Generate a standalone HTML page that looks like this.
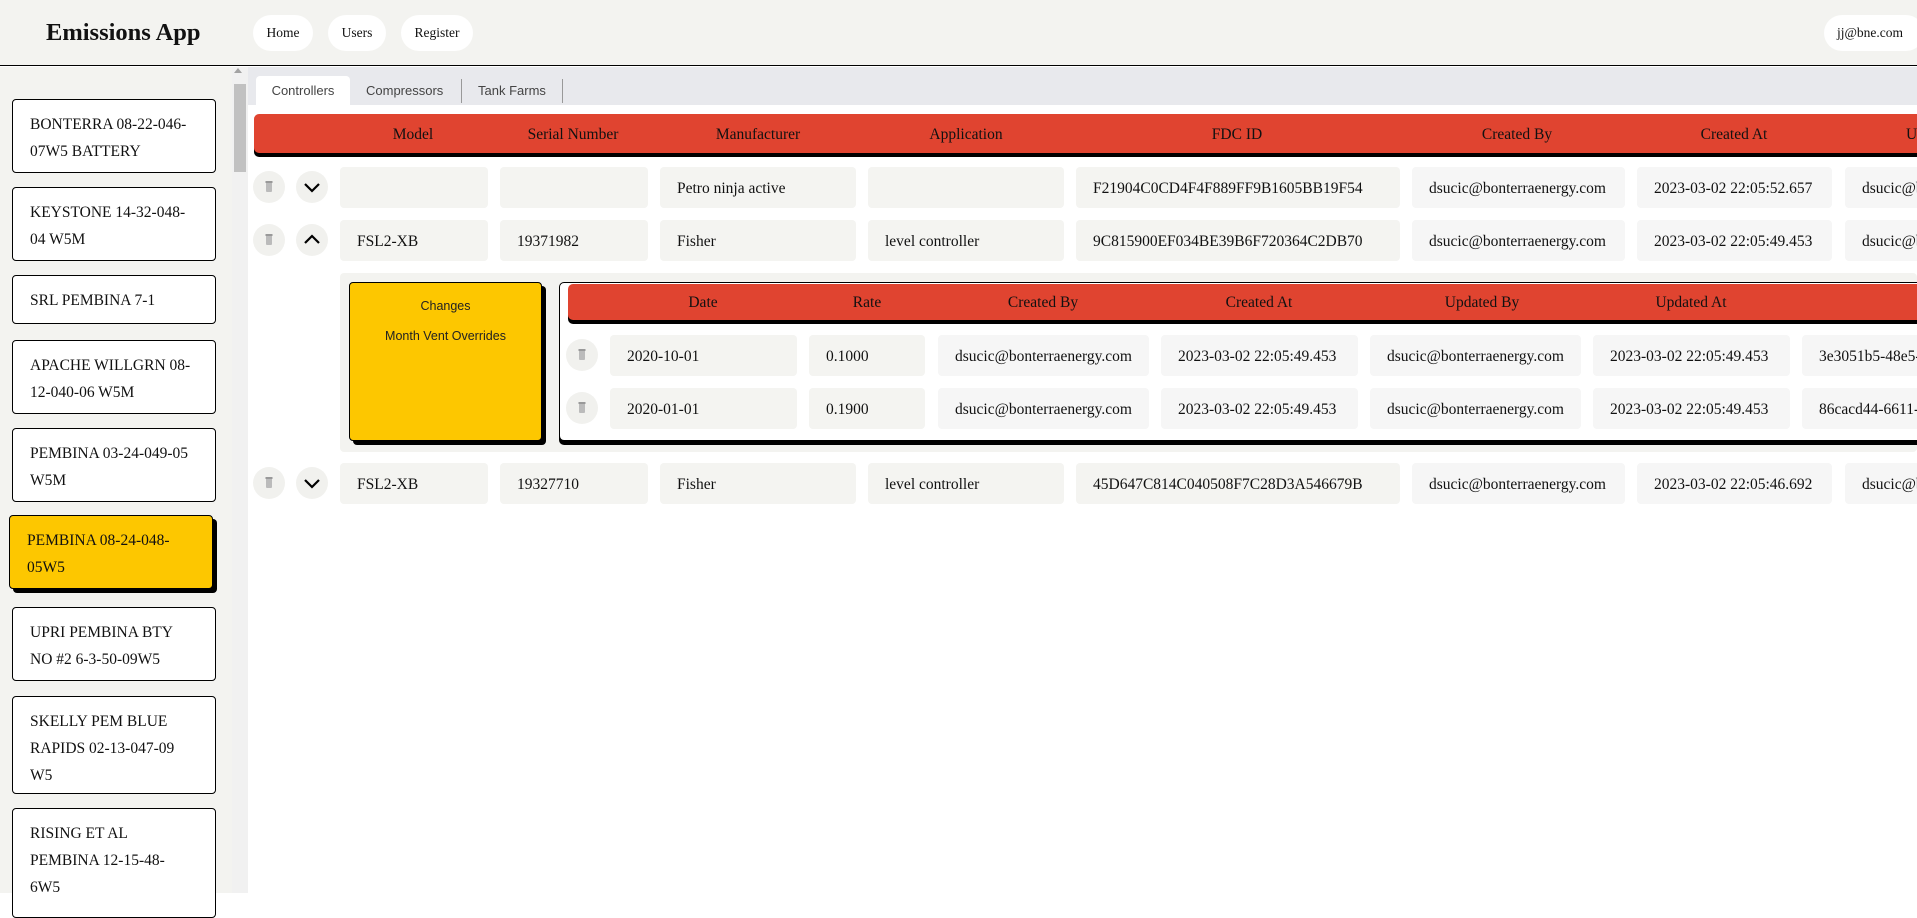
<!DOCTYPE html>
<html><head><meta charset="utf-8"><style>
*{box-sizing:border-box;margin:0;padding:0}
body{width:1917px;height:893px;overflow:hidden;background:#fff;font-family:"Liberation Serif",serif;color:#111;position:relative}
.a{position:absolute}
.hdr{left:0;top:0;width:1917px;height:66px;background:#f3f3f0;border-bottom:1.5px solid #000}
.title{left:46px;top:19px;font-size:24.5px;font-weight:bold}
.pill{top:15px;height:36px;background:#fff;border-radius:18px;font-size:13.5px;line-height:36px;text-align:center}
.side{left:0;top:67px;width:232px;height:826px;background:#f3f3f0}
.sb{left:232px;top:67px;width:16px;height:826px;background:#f1f1f1}
.card{left:12px;width:204px;background:#fff;border:1.3px solid #000;border-radius:4px;font-size:15.5px;line-height:27px;padding:11px 22px 0 17px}
.tabs{left:248px;top:67px;width:1669px;height:38px;background:#e8e9ed}
.tab{top:76px;height:29px;font-family:"Liberation Sans",sans-serif;font-size:13px;color:#444;line-height:29px}
.red{background:#e04430;box-shadow:0 4px 0 #000;border-radius:5px 0 0 5px}
.h{font-size:15.5px;transform:translateX(-50%);white-space:nowrap}
.c{height:41px;background:#f4f4f1;border-radius:4px;font-size:15.5px;line-height:43px;padding-left:17px;white-space:nowrap;overflow:hidden}
.c2{background:#f6f6f6}
.btn{width:32px;height:32px;border-radius:50%;background:#f1f1ee}
.btn svg{position:absolute;left:0;top:0}
</style></head><body>
<div class="a hdr"></div>
<div class="a title">Emissions App</div>
<div class="a pill" style="left:253px;width:60px">Home</div>
<div class="a pill" style="left:328px;width:58px">Users</div>
<div class="a pill" style="left:401px;width:72px">Register</div>
<div class="a pill" style="left:1824px;width:100px;text-align:left;padding-left:13px">jj@bne.com</div>

<div class="a side"></div>
<div class="a sb"></div>
<div class="a" style="left:234px;top:68px;width:0;height:0;border-left:4px solid transparent;border-right:4px solid transparent;border-bottom:5px solid #a3a3a3"></div>
<div class="a" style="left:234px;top:84px;width:12px;height:88px;background:#c1c1c1"></div>

<div class="a card" style="top:99px;height:74px">BONTERRA 08-22-046-07W5 BATTERY</div>
<div class="a card" style="top:187px;height:74px">KEYSTONE 14-32-048-04 W5M</div>
<div class="a card" style="top:275px;height:49px">SRL PEMBINA 7-1</div>
<div class="a card" style="top:340px;height:74px">APACHE WILLGRN 08-12-040-06 W5M</div>
<div class="a card" style="top:428px;height:74px">PEMBINA 03-24-049-05 W5M</div>
<div class="a card" style="top:515px;left:9px;height:74px;background:#fdc700;box-shadow:4px 4px 0 #000;padding-left:17px">PEMBINA 08-24-048-05W5</div>
<div class="a card" style="top:607px;height:74px">UPRI PEMBINA BTY NO #2 6-3-50-09W5</div>
<div class="a card" style="top:696px;height:98px">SKELLY PEM BLUE RAPIDS 02-13-047-09 W5</div>
<div class="a card" style="top:808px;height:110px">RISING ET AL PEMBINA 12-15-48-6W5</div>

<div class="a tabs"></div>
<div class="a tab" style="left:256px;width:94px;background:#fff;border-radius:4px 4px 0 0;text-align:center">Controllers</div>
<div class="a tab" style="left:366px">Compressors</div>
<div class="a" style="left:461px;top:79px;width:1px;height:24px;background:#999"></div>
<div class="a tab" style="left:478px">Tank Farms</div>
<div class="a" style="left:562px;top:79px;width:1px;height:24px;background:#999"></div>

<div class="a red" style="left:254px;top:114px;width:1663px;height:39px"></div>
<div class="a h" style="left:413px;top:126px">Model</div>
<div class="a h" style="left:573px;top:126px">Serial Number</div>
<div class="a h" style="left:758px;top:126px">Manufacturer</div>
<div class="a h" style="left:966px;top:126px">Application</div>
<div class="a h" style="left:1237px;top:126px">FDC ID</div>
<div class="a h" style="left:1517px;top:126px">Created By</div>
<div class="a h" style="left:1734px;top:126px">Created At</div>
<div class="a h" style="left:1906px;top:126px;transform:none">U</div>

<!-- row1 -->
<div class="a btn" style="left:253px;top:171px"><svg width="32" height="32"><rect x="13" y="11" width="6" height="10" rx="1" fill="#bbb"/><rect x="12.5" y="10" width="7" height="2" fill="#999"/></svg></div>
<div class="a btn" style="left:296px;top:171px"><svg width="32" height="32"><path d="M9 13 L16 20 L23 13" stroke="#000" stroke-width="2.2" fill="none"/></svg></div>
<div class="a c" style="left:340px;top:167px;width:148px"></div>
<div class="a c" style="left:500px;top:167px;width:148px"></div>
<div class="a c" style="left:660px;top:167px;width:196px">Petro ninja active</div>
<div class="a c" style="left:868px;top:167px;width:196px"></div>
<div class="a c" style="left:1076px;top:167px;width:324px">F21904C0CD4F4F889FF9B1605BB19F54</div>
<div class="a c c2" style="left:1412px;top:167px;width:213px">dsucic@bonterraenergy.com</div>
<div class="a c c2" style="left:1637px;top:167px;width:195px">2023-03-02 22:05:52.657</div>
<div class="a c c2" style="left:1845px;top:167px;width:80px">dsucic@bonterraenergy.com</div>

<!-- row2 -->
<div class="a btn" style="left:253px;top:224px"><svg width="32" height="32"><rect x="13" y="11" width="6" height="10" rx="1" fill="#bbb"/><rect x="12.5" y="10" width="7" height="2" fill="#999"/></svg></div>
<div class="a btn" style="left:296px;top:224px"><svg width="32" height="32"><path d="M9 19 L16 12 L23 19" stroke="#000" stroke-width="2.2" fill="none"/></svg></div>
<div class="a c" style="left:340px;top:220px;width:148px">FSL2-XB</div>
<div class="a c" style="left:500px;top:220px;width:148px">19371982</div>
<div class="a c" style="left:660px;top:220px;width:196px">Fisher</div>
<div class="a c" style="left:868px;top:220px;width:196px">level controller</div>
<div class="a c" style="left:1076px;top:220px;width:324px">9C815900EF034BE39B6F720364C2DB70</div>
<div class="a c c2" style="left:1412px;top:220px;width:213px">dsucic@bonterraenergy.com</div>
<div class="a c c2" style="left:1637px;top:220px;width:195px">2023-03-02 22:05:49.453</div>
<div class="a c c2" style="left:1845px;top:220px;width:80px">dsucic@bonterraenergy.com</div>

<!-- expanded -->
<div class="a" style="left:340px;top:273px;width:1577px;height:179px;background:#f3f3f0;border-radius:4px"></div>
<div class="a" style="left:349px;top:282px;width:193px;height:159px;background:#fdc700;border:1.3px solid #000;border-radius:4px;box-shadow:4px 4px 0 #000;font-family:'Liberation Sans',sans-serif;font-size:12.5px;text-align:center;color:#222">
<div style="margin-top:16px">Changes</div><div style="margin-top:16px">Month Vent Overrides</div></div>
<div class="a" style="left:559px;top:282px;width:1370px;height:159px;background:#fff;border:1.3px solid #000;border-radius:5px;box-shadow:0 4px 0 #000"></div>
<div class="a red" style="left:568px;top:284px;width:1349px;height:36px"></div>
<div class="a h" style="left:703px;top:294px">Date</div>
<div class="a h" style="left:867px;top:294px">Rate</div>
<div class="a h" style="left:1043px;top:294px">Created By</div>
<div class="a h" style="left:1259px;top:294px">Created At</div>
<div class="a h" style="left:1482px;top:294px">Updated By</div>
<div class="a h" style="left:1691px;top:294px">Updated At</div>

<div class="a btn" style="left:566px;top:339px"><svg width="32" height="32"><rect x="13" y="11" width="6" height="10" rx="1" fill="#bbb"/><rect x="12.5" y="10" width="7" height="2" fill="#999"/></svg></div>
<div class="a c" style="left:610px;top:335px;width:187px">2020-10-01</div>
<div class="a c" style="left:809px;top:335px;width:116px">0.1000</div>
<div class="a c c2" style="left:938px;top:335px;width:211px">dsucic@bonterraenergy.com</div>
<div class="a c c2" style="left:1161px;top:335px;width:197px">2023-03-02 22:05:49.453</div>
<div class="a c c2" style="left:1370px;top:335px;width:211px">dsucic@bonterraenergy.com</div>
<div class="a c c2" style="left:1593px;top:335px;width:197px">2023-03-02 22:05:49.453</div>
<div class="a c c2" style="left:1802px;top:335px;width:130px">3e3051b5-48e5-4c1d</div>

<div class="a btn" style="left:566px;top:392px"><svg width="32" height="32"><rect x="13" y="11" width="6" height="10" rx="1" fill="#bbb"/><rect x="12.5" y="10" width="7" height="2" fill="#999"/></svg></div>
<div class="a c" style="left:610px;top:388px;width:187px">2020-01-01</div>
<div class="a c" style="left:809px;top:388px;width:116px">0.1900</div>
<div class="a c c2" style="left:938px;top:388px;width:211px">dsucic@bonterraenergy.com</div>
<div class="a c c2" style="left:1161px;top:388px;width:197px">2023-03-02 22:05:49.453</div>
<div class="a c c2" style="left:1370px;top:388px;width:211px">dsucic@bonterraenergy.com</div>
<div class="a c c2" style="left:1593px;top:388px;width:197px">2023-03-02 22:05:49.453</div>
<div class="a c c2" style="left:1802px;top:388px;width:130px">86cacd44-6611-4a2b</div>

<!-- row3 -->
<div class="a btn" style="left:253px;top:467px"><svg width="32" height="32"><rect x="13" y="11" width="6" height="10" rx="1" fill="#bbb"/><rect x="12.5" y="10" width="7" height="2" fill="#999"/></svg></div>
<div class="a btn" style="left:296px;top:467px"><svg width="32" height="32"><path d="M9 13 L16 20 L23 13" stroke="#000" stroke-width="2.2" fill="none"/></svg></div>
<div class="a c" style="left:340px;top:463px;width:148px">FSL2-XB</div>
<div class="a c" style="left:500px;top:463px;width:148px">19327710</div>
<div class="a c" style="left:660px;top:463px;width:196px">Fisher</div>
<div class="a c" style="left:868px;top:463px;width:196px">level controller</div>
<div class="a c" style="left:1076px;top:463px;width:324px">45D647C814C040508F7C28D3A546679B</div>
<div class="a c c2" style="left:1412px;top:463px;width:213px">dsucic@bonterraenergy.com</div>
<div class="a c c2" style="left:1637px;top:463px;width:195px">2023-03-02 22:05:46.692</div>
<div class="a c c2" style="left:1845px;top:463px;width:80px">dsucic@bonterraenergy.com</div>
</body></html>
